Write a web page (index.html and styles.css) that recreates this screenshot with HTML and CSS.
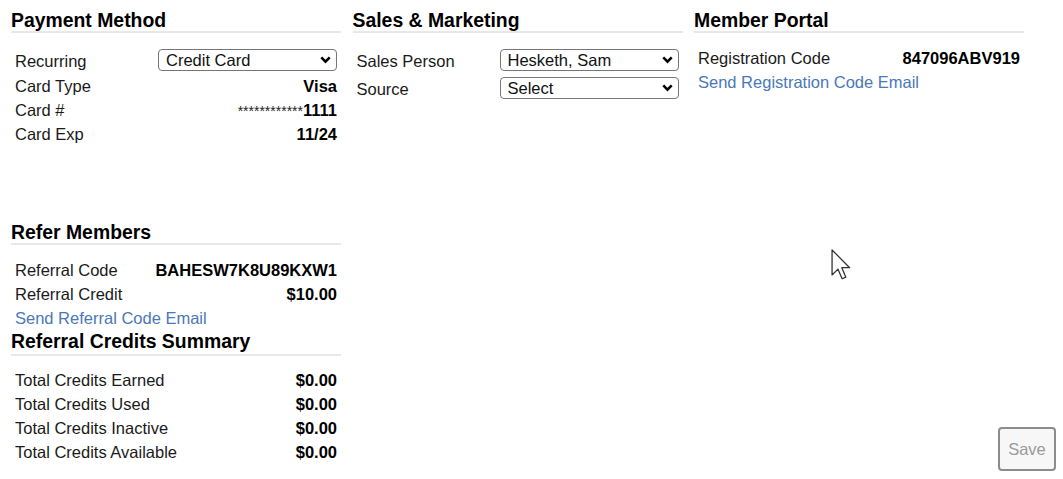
FILE: index.html
```html
<!DOCTYPE html>
<html lang="en">
<head>
  <meta charset="UTF-8" />
  <title>Member Details</title>
  <link rel="stylesheet" href="styles.css">
</head>
<body>
  <div class="page">
    <div class="panels">
      <section class="panel panel-payment">
        <h2>Payment Method</h2>
        <div class="row row-select">
          <span class="label">Recurring</span>
          <div class="select-wrap">
            <select><option>Credit Card</option></select>
            <svg class="chevron" viewBox="0 0 11 8" width="11" height="8"><path d="M1.3 1.3 L5.5 5.6 L9.7 1.3" /></svg>
          </div>
        </div>
        <div class="row"><span>Card Type</span><b>Visa</b></div>
        <div class="row"><span>Card #</span><span class="value"><span class="mask">************</span><b>1111</b></span></div>
        <div class="row"><span>Card Exp</span><b>11/24</b></div>
      </section>

      <section class="panel">
        <h2>Sales &amp; Marketing</h2>
        <div class="row row-select">
          <span class="label">Sales Person</span>
          <div class="select-wrap">
            <select><option>Hesketh, Sam</option></select>
            <svg class="chevron" viewBox="0 0 11 8" width="11" height="8"><path d="M1.3 1.3 L5.5 5.6 L9.7 1.3" /></svg>
          </div>
        </div>
        <div class="row row-select">
          <span class="label">Source</span>
          <div class="select-wrap">
            <select><option>Select</option></select>
            <svg class="chevron" viewBox="0 0 11 8" width="11" height="8"><path d="M1.3 1.3 L5.5 5.6 L9.7 1.3" /></svg>
          </div>
        </div>
      </section>

      <section class="panel">
        <h2>Member Portal</h2>
        <div class="row"><span>Registration Code</span><b>847096ABV919</b></div>
        <div class="row"><a href="#">Send Registration Code Email</a></div>
      </section>

      <section class="panel panel-refer">
        <h2>Refer Members</h2>
        <div class="row"><span>Referral Code</span><b>BAHESW7K8U89KXW1</b></div>
        <div class="row"><span>Referral Credit</span><b>$10.00</b></div>
        <div class="row"><a href="#">Send Referral Code Email</a></div>

        <h2 class="summary-title">Referral Credits Summary</h2>
        <div class="row"><span>Total Credits Earned</span><b>$0.00</b></div>
        <div class="row"><span>Total Credits Used</span><b>$0.00</b></div>
        <div class="row"><span>Total Credits Inactive</span><b>$0.00</b></div>
        <div class="row"><span>Total Credits Available</span><b>$0.00</b></div>
      </section>
    </div>

    <button class="save-btn" disabled>Save</button>
  </div>

  <!-- mouse pointer left in the capture -->
  <svg class="cursor" viewBox="0 0 13 20" width="21" height="32">
    <path d="M0.6 0.6 L0.6 16.2 L4.3 12.6 L6.9 18.6 L9.2 17.6 L6.7 11.7 L11.6 11.7 Z" />
  </svg>
</body>
</html>
```

FILE: styles.css
```css
body {
  margin: 0;
  font-family: "Liberation Sans", Arial, sans-serif;
  font-size: 16.5px;
  color: #1a1a1a;
  background: #fff;
}
/* panels and the save button share one cell, the button sits bottom right */
.page {
  display: grid;
  grid-template-areas: "main";
  min-height: 100vh;
  box-sizing: border-box;
  padding: 10px 7px 8px 11px;
}
.panels,
.save-btn {
  grid-area: main;
}
.panels {
  display: grid;
  grid-template-columns: repeat(3, 330px);
  column-gap: 11.5px;
  align-self: start;
  align-items: start;
}
.panel-payment {
  min-height: 212px;
}
.panel h2 {
  margin: 0 0 13px;
  font-size: 19.4px;
  line-height: 21px;
  font-weight: bold;
  color: #000;
  border-bottom: 2px solid #e8e8e8;
}
.panel h2.summary-title {
  margin-top: 1px;
  padding-bottom: 2px;
  margin-bottom: 12px;
}
.row {
  display: flex;
  justify-content: space-between;
  align-items: center;
  height: 24px;
  padding: 0 4px;
  white-space: nowrap;
}
.row b {
  font-weight: bold;
  color: #000;
}
.row .mask {
  font-size: 14px;
  color: #222;
}
.row-select {
  height: 28px;
  justify-content: flex-start;
}
.row-select .label {
  width: 143px;
  flex-shrink: 0;
  padding-top: 3px;
}
.select-wrap {
  position: relative;
  flex: 1;
  display: flex;
}
.select-wrap select {
  appearance: none;
  -webkit-appearance: none;
  width: 100%;
  height: 22px;
  margin: 0;
  padding: 0 24px 0 7px;
  border: 1px solid #767676;
  border-radius: 4px;
  background: #fff;
  font-family: inherit;
  font-size: 16.5px;
  line-height: 20px;
  color: #111;
}
.chevron {
  position: absolute;
  right: 6px;
  top: 7px;
  pointer-events: none;
}
.chevron path {
  fill: none;
  stroke: #000;
  stroke-width: 2.5;
}
.row a {
  color: #4a78b8;
  text-decoration: none;
}
.save-btn {
  justify-self: end;
  align-self: end;
  width: 58px;
  height: 44px;
  padding: 0;
  border: 2px solid #8c8c8c;
  border-radius: 4px;
  background: #f7f7f7;
  color: #9a9a9a;
  font-family: inherit;
  font-size: 16.5px;
}
.cursor {
  position: absolute;
  left: 831px;
  top: 249px;
}
.cursor path {
  fill: #fff;
  stroke: #333;
  stroke-width: 0.8;
  stroke-linejoin: round;
}
```
